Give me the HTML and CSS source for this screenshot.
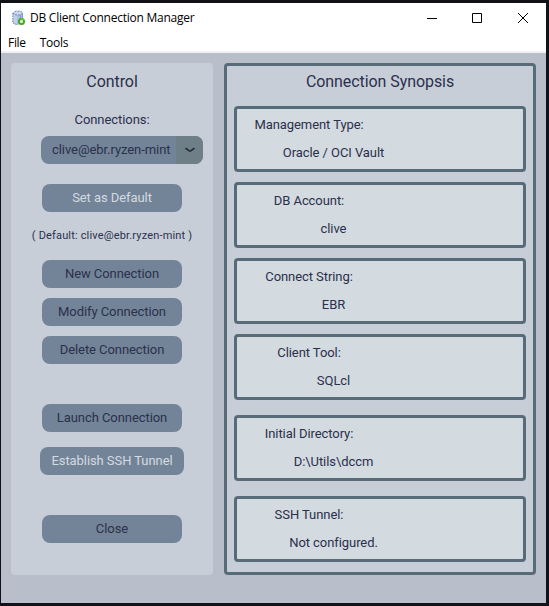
FILE: index.html
```html
<!DOCTYPE html>
<html lang="en">
<head>
<meta charset="utf-8">
<title>DB Client Connection Manager</title>
<link rel="stylesheet" href="styles.css">
</head>
<body>
<div class="window">
  <header class="titlebar">
    <svg class="app-icon" width="14" height="16" viewBox="0 0 14 16">
      <path d="M1 3v9c0 1.300 2 2.500 5 2.500s5-1.200 5-2.500V3z" fill="#a9c1de"/>
      <path d="M2 5v8M4 5.500v8.500" stroke="#d3e1f0"/>
      <path d="M8.500 5v8M10.500 4v8" stroke="#8298bd"/>
      <ellipse cx="6" cy="3" rx="4.500" ry="2" fill="#c9d8ec" stroke="#6f87b3" stroke-dasharray="2 1"/>
      <path d="M.8 3v9.500c.7 1.200 2.600 2 5.200 2" fill="none" stroke="#637ba7" stroke-dasharray="1.500 1"/>
      <circle cx="9.500" cy="11.500" r="2.600" fill="#d5edcb" stroke="#43a51f" stroke-width="1.800"/>
      <path d="M8 8.200l4 .3-.8 2.500z" fill="#72cf36"/>
    </svg>
    <h1 class="title">DB Client Connection Manager</h1>
    <div class="controls">
      <svg class="minimize" width="10" height="10" viewBox="0 0 10 10"><path d="M0 5.500h10" stroke="#000"/></svg>
      <svg width="10" height="10" viewBox="0 0 10 10"><path d="M.5.500h9v9h-9z" fill="none" stroke="#000"/></svg>
      <svg width="10" height="10" viewBox="0 0 10 10"><path d="M0 0l10 10M10 0L0 10" stroke="#000"/></svg>
    </div>
  </header>
  <nav class="menu"><span class="file">File</span><span class="tools">Tools</span></nav>
  <main class="content">
    <section class="panel control">
      <h2>Control</h2>
      <div class="label">Connections:</div>
      <div class="combo"><span class="value">clive@ebr.ryzen-mint</span><span class="arrow"><svg width="10" height="6" viewBox="0 0 10 6"><path d="M1 1.500L4 3.700Q5 4.300 6 3.700L9 1.500" fill="none" stroke="#272b40" stroke-width="1.600" stroke-linecap="round"/></svg></span></div>
      <button class="light default">Set as Default</button>
      <div class="note">( Default: clive@ebr.ryzen-mint )</div>
      <button>New Connection</button>
      <button class="next">Modify Connection</button>
      <button class="next">Delete Connection</button>
      <button class="launch">Launch Connection</button>
      <button class="light tunnel">Establish SSH Tunnel</button>
      <button class="close">Close</button>
    </section>
    <section class="panel synopsis">
      <h2>Connection Synopsis</h2>
      <div class="card"><span class="key">Management Type:</span><span class="val">Oracle / OCI Vault</span></div>
      <div class="card"><span class="key">DB Account:</span><span class="val">clive</span></div>
      <div class="card"><span class="key">Connect String:</span><span class="val">EBR</span></div>
      <div class="card"><span class="key">Client Tool:</span><span class="val">SQLcl</span></div>
      <div class="card spaced"><span class="key">Initial Directory:</span><span class="val">D:\Utils\dccm</span></div>
      <div class="card spaced"><span class="key">SSH Tunnel:</span><span class="val">Not configured.</span></div>
    </section>
  </main>
</div>
</body>
</html>
```
FILE: styles.css
```css
* { box-sizing: border-box; }
body {
  margin: 0;
  width: 549px;
  height: 606px;
  padding: 3px 3px 3px 1px;
  overflow: hidden;
  background: #101218;
  color: #2b304c;
  font: 13px/18px Roboto, sans-serif;
  letter-spacing: -.07px;
}
.window { width: 545px; height: 600px; background: #b8bfcb; }
.titlebar {
  display: flex;
  height: 30px;
  align-items: center;
  padding: 0 18px 0 11px;
  background: #fff;
  color: #000;
}
.app-icon { flex: none; margin-right: 4px; }
.title {
  margin: 0;
  font: 12px/18px "Open Sans", sans-serif;
  letter-spacing: -.25px;
  white-space: nowrap;
}
.controls { display: flex; gap: 36px; margin-left: auto; }
.controls svg { display: block; }
.controls .minimize { margin-right: -1px; }
.menu {
  display: flex;
  height: 20px;
  padding-left: 7px;
  gap: 14px;
  border-bottom: 2px solid #f0f0f0;
  background: #fff;
  color: #000;
  font: 12px/20px "Open Sans", sans-serif;
  letter-spacing: -.3px;
}
.content { display: flex; gap: 11px; padding: 10px; }
.panel {
  display: flex;
  flex-direction: column;
  align-items: center;
  height: 512px;
  border-radius: 4px;
  background: #c7ced8;
}
.control { width: 202px; padding-top: 9px; }
h2 { margin: 0; font-size: 16px; font-weight: 400; line-height: 20px; }
.label { margin-top: 19px; }
.combo {
  display: flex;
  flex: none;
  width: 162px;
  height: 28px;
  margin: 7px 0 0 20px;
  overflow: hidden;
  border-radius: 8px;
  background: #738498;
}
.value { width: 135px; padding-left: 11px; line-height: 27px; white-space: nowrap; }
.arrow {
  display: flex;
  width: 27px;
  align-items: center;
  justify-content: center;
  background: #6f7f88;
}
button {
  flex: none;
  width: 140px;
  height: 28px;
  padding: 0 0 1px;
  border: 0;
  border-radius: 8px;
  background: #738498;
  color: inherit;
  font: inherit;
  letter-spacing: inherit;
}
.light { color: #d3dae1; }
.default { margin-top: 20px; }
.note {
  height: 18px;
  margin: 15px 0;
  font-size: 11px;
  letter-spacing: .16px;
  white-space: nowrap;
}
.next { margin-top: 10px; }
.launch { margin-top: 40px; }
.tunnel { width: 144px; margin-top: 15px; }
.close { margin-top: 40px; }
.synopsis { width: 312px; padding-top: 6px; border: 3px solid #586b79; }
.synopsis h2 { margin-bottom: 14px; }
.card {
  display: flex;
  flex: none;
  flex-direction: column;
  width: 292px;
  height: 66px;
  padding: 7px 0 0;
  border: 3px solid #586b79;
  border-radius: 4px;
  background: #d3dae0;
}
.card + .card { margin-top: 10px; }
.card + .spaced { margin-top: 15px; }
.key { width: 144px; text-align: center; }
.val { width: 193px; margin-top: 10px; text-align: center; }
```
